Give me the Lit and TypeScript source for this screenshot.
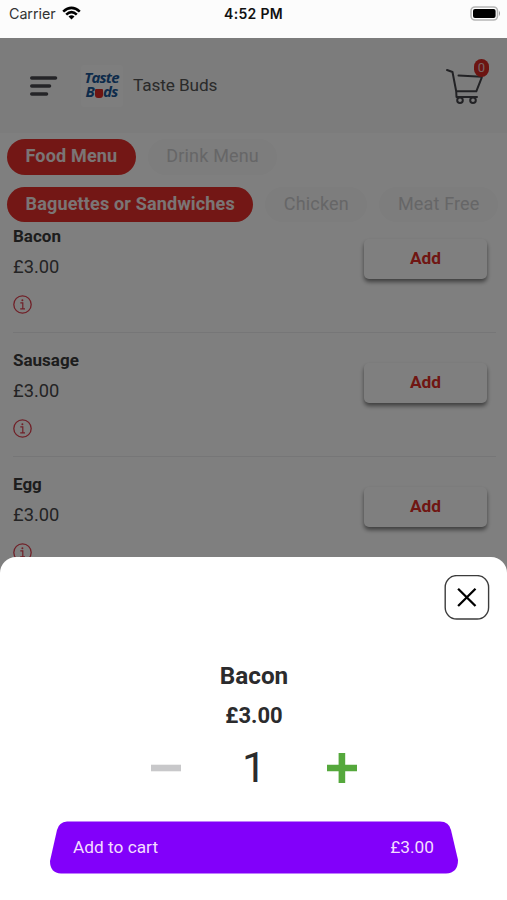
import { LitElement, html, css } from "lit";
import { customElement, property } from "lit/decorators.js";

interface Dish {
  name: string;
  price: string;
}

const dishes: Dish[] = [
  { name: "Bacon", price: "£3.00" },
  { name: "Sausage", price: "£3.00" },
  { name: "Egg", price: "£3.00" },
];

@customElement("status-bar")
class StatusBar extends LitElement {
  static styles = css`
    :host {
      display: grid;
      grid-template-columns: 1fr auto 1fr;
      align-items: center;
      height: 38px;
      padding: 0 9px 11px 9px;
      box-sizing: border-box;
      background: #fcfcfc;
      color: #111;
      font: 14.3px/18px Inter, sans-serif;
    }
    .left { display: flex; align-items: center; gap: 6px; color: #333; letter-spacing: -0.05px; }
    .time { font-weight: 600; letter-spacing: 0.3px; font-size: 14px; }
    .right { display: flex; justify-content: flex-end; margin-right: -3px; }
    svg { display: block; }
    .left svg { margin-top: -2px; }
    .right svg { margin-top: -1px; }
  `;
  render() {
    return html`
      <div class="left">
        <span>Carrier</span>
        <svg width="19" height="14" viewBox="0 0 19 14">
          <g fill="none" stroke="#000" stroke-width="2.6">
            <path d="M1.2 5.6Q9.5 -2 17.8 5.6" />
            <path d="M4.2 8.6Q9.5 3.6 14.8 8.6" />
          </g>
          <path d="M9.5 13.5L6.5 10.4Q9.5 8 12.5 10.4Z" />
        </svg>
      </div>
      <span class="time">4:52 PM</span>
      <div class="right">
        <svg width="31" height="15" viewBox="0 0 31 15">
          <rect x="1" y="1" width="26.5" height="13" rx="4" fill="#fff" stroke="#b5b5b5" stroke-width="1.6" />
          <rect x="3" y="3" width="22.6" height="9" rx="2" />
          <path d="M29 4.8Q31 7.5 29 10.2Z" fill="#999" />
        </svg>
      </div>
    `;
  }
}

@customElement("dish-row")
class DishRow extends LitElement {
  @property({ attribute: false }) dish!: Dish;
  static styles = css`
    :host {
      display: flex;
      justify-content: space-between;
      align-items: flex-start;
      box-sizing: border-box;
      height: 124.3px;
      padding: 16px 9px 0 0;
      border-bottom: 1.5px solid #ececee;
      color: #48484a;
    }
    .name { font: 700 17px/22px Roboto, sans-serif; color: #3a3a3a; }
    .price { margin-top: 9px; font: 400 18.3px/22px Roboto, sans-serif; }
    .info { display: block; margin-top: 17px; }
    .add {
      width: 123px;
      height: 40px;
      margin-top: 14px;
      border-radius: 5px;
      background: #fff;
      color: #e02c26;
      font: 700 17.3px/39px Roboto, sans-serif;
      text-align: center;
      box-shadow: 0 3px 4px rgba(0, 0, 0, 0.5);
    }
  `;
  render() {
    return html`
      <div>
        <div class="name">${this.dish.name}</div>
        <div class="price">${this.dish.price}</div>
        <svg class="info" width="19" height="19" viewBox="0 0 19 19" fill="none" stroke="#e0404f">
          <circle cx="9.5" cy="9.5" r="8.7" stroke-width="1.3" />
          <path d="M7.3 7.9H9.8V13.6M7.2 13.8H12" stroke-width="1.2" />
          <circle cx="9.4" cy="5.2" r="1" fill="#e0404f" stroke="none" />
        </svg>
      </div>
      <div class="add">Add</div>
    `;
  }
}

@customElement("cart-sheet")
class CartSheet extends LitElement {
  static styles = css`
    :host {
      display: flex;
      flex-direction: column;
      box-sizing: border-box;
      padding: 18px 17px 0 18px;
      background: #fff;
      border-radius: 16px 16px 0 0;
      color: #2b2b2d;
      font-family: Roboto, sans-serif;
    }
    svg { display: block; }
    .close { align-self: flex-end; }
    .title { margin-top: 41px; font: 700 24.3px/30px Roboto, sans-serif; text-align: center; }
    .price { margin-top: 12px; font: 700 22px/26px Roboto, sans-serif; text-align: center; }
    .stepper {
      display: flex;
      justify-content: space-between;
      align-items: center;
      width: 206px;
      height: 52px;
      margin: 12.5px auto 0;
    }
    .count { font-size: 43px; line-height: 50px; margin: 0 0 2px; }
    .submit {
      display: grid;
      width: 410px;
      height: 53px;
      margin: 27.5px 0 0 31px;
    }
    .submit > * { grid-area: 1 / 1; }
    .labels {
      display: flex;
      justify-content: space-between;
      padding: 0 25px 0 24px;
      color: #f3dcff;
      font-size: 17.3px;
      line-height: 53px;
    }
  `;
  render() {
    return html`
      <svg class="close" width="46" height="45" viewBox="0 0 46 45" fill="none">
        <rect x="1.2" y="0.6" width="43.4" height="43.4" rx="11.5" stroke="#3c3c3c" stroke-width="1.4" />
        <path d="M14.1 13.8L31.5 31M31.5 13.8L14.1 31" stroke="#000" stroke-width="2.3" />
      </svg>
      <div class="title">Bacon</div>
      <div class="price">£3.00</div>
      <div class="stepper">
        <svg width="30" height="30" viewBox="0 0 30 30"><path d="M0 11.7H30V18.3H0Z" fill="#c8c8ca" /></svg>
        <span class="count">1</span>
        <svg width="30" height="30" viewBox="0 0 30 30">
          <path d="M11.6 0H18.2V11.7H30V18.3H18.2V30H11.6V18.3H0V11.7H11.6Z" fill="#55a83c" />
        </svg>
      </div>
      <div class="submit">
        <svg width="410" height="53" viewBox="0 0 410 53">
          <path
            d="M18 0.5H391Q400 0.5 402 9L409 39Q409 52 397 52.5H12Q1 52 1 40L8 9Q10 1 18 0.5Z"
            fill="#8200fa"
          />
        </svg>
        <div class="labels"><span>Add to cart</span><span>£3.00</span></div>
      </div>
    `;
  }
}

@customElement("app-root")
class AppRoot extends LitElement {
  static styles = css`
    :host {
      display: flex;
      flex-direction: column;
      position: relative;
      height: 900px;
      overflow: hidden;
      background: #fff;
      font-family: Roboto, sans-serif;
    }
    status-bar { flex: none; }
    .page { position: relative; flex: 1; min-height: 0; overflow: hidden; background: #fff; }
    .scrim { position: absolute; inset: 0; background: rgba(0, 0, 0, 0.5); }
    .header {
      display: flex;
      align-items: center;
      height: 95px;
      padding: 0 18px 0 30px;
      box-sizing: border-box;
      background: #f8f8f8;
    }
    svg { display: block; }
    .logo {
      display: flex;
      flex-direction: column;
      align-items: center;
      box-sizing: border-box;
      width: 42px;
      height: 42px;
      margin: 0 10px 0 23px;
      padding: 5px 1px 0 0;
      border-radius: 4px;
      background: #fdfdfd;
      color: #1a5796;
      font: italic 700 15px/14px "Open Sans", sans-serif;
      letter-spacing: -0.8px;
    }
    .buds { display: flex; }
    .bud {
      width: 7.5px;
      height: 9px;
      margin: 5px 0.5px 0 1px;
      border-radius: 1px 1px 3px 3px;
      background: #dd2b25;
    }
    .brand { flex: 1; color: #555; font-size: 17.2px; margin-top: -2px; letter-spacing: -0.1px; }
    .cart { position: relative; width: 44px; height: 50px; }
    .badge {
      position: absolute;
      top: -2px;
      right: 0;
      width: 15px;
      height: 18px;
      border-radius: 8px;
      background: #d82822;
      color: #f2cccc;
      font-size: 13px;
      line-height: 18px;
      text-align: center;
    }
    .chips { position: relative; display: flex; gap: 12px; padding: 6px 0 0 7px; }
    .chips + .chips { padding-top: 12px; }
    .chip {
      flex: none;
      height: 35.5px;
      padding: 0 18.5px;
      border-radius: 18px;
      background: #fafafa;
      color: #cdcdcf;
      font-size: 18px;
      line-height: 34px;
      letter-spacing: 0.17px;
    }
    .on { background: #e62f2a; color: #f6eaea; font-weight: 700; letter-spacing: 0.17px; }
    .list { margin: -13.5px 11px 0 13px; }
    cart-sheet { position: absolute; left: 0; right: 0; bottom: 0; height: 343px; }
  `;
  render() {
    return html`
      <status-bar></status-bar>
      <div class="page">
        <div class="header">
          <svg width="28" height="20" viewBox="0 0 28 20" stroke="#48484e" stroke-width="3.6" stroke-linecap="round">
            <path d="M1.8 2H25.5M1.8 10H19.5M1.8 18H16.5" />
          </svg>
          <div class="logo">
            <span>Taste</span>
            <div class="buds"><span>B</span><i class="bud"></i><span>ds</span></div>
          </div>
          <div class="brand">Taste Buds</div>
          <div class="cart">
            <svg width="44" height="50" viewBox="0 0 44 50" fill="none" stroke="#45454a" stroke-width="2" stroke-linecap="round" stroke-linejoin="round">
              <path d="M2 9L7.5 11L11.2 30.3H31.3L36.8 16.3M13.5 14.6L36.8 15.8M11.2 30.3L11.5 36H32" />
              <circle cx="15" cy="39.2" r="2.8" />
              <circle cx="28" cy="39.2" r="2.8" />
            </svg>
            <span class="badge">0</span>
          </div>
        </div>
        <div class="chips">
          <div class="chip on">Food Menu</div>
          <div class="chip">Drink Menu</div>
        </div>
        <div class="chips">
          <div class="chip on">Baguettes or Sandwiches</div>
          <div class="chip">Chicken</div>
          <div class="chip">Meat Free</div>
        </div>
        <div class="list">${dishes.map((d) => html`<dish-row .dish=${d}></dish-row>`)}</div>
        <div class="scrim"></div>
      </div>
      <cart-sheet></cart-sheet>
    `;
  }
}
